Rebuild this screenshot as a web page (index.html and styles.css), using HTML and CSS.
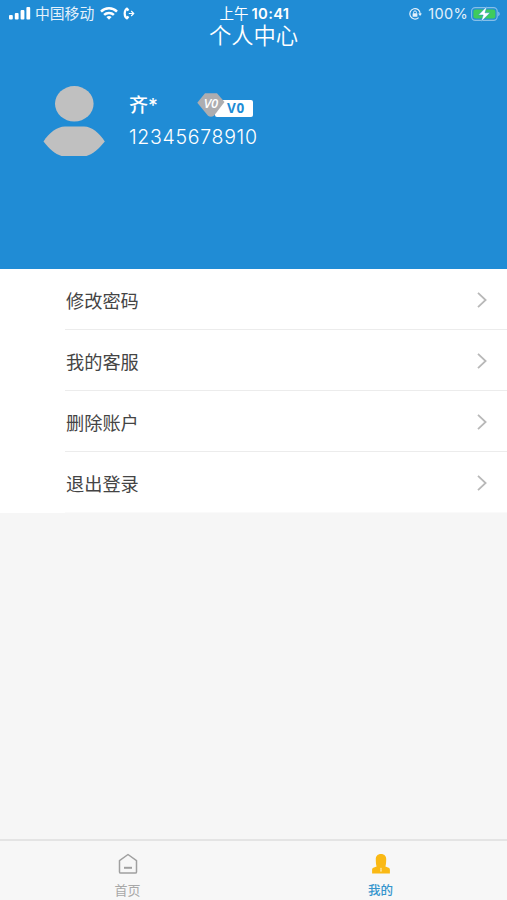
FILE: index.html
```html
<!DOCTYPE html>
<html lang="zh-CN">
<head>
    <meta charset="UTF-8">
    <meta name="viewport" content="width=device-width, initial-scale=1.0">
    <title>个人中心</title>
    <link rel="stylesheet" href="styles.css">
</head>
<body>
    <header class="header">
        <div class="status-bar">
            <div class="status-left">
                <svg class="signal" width="22" height="13" viewBox="0 0 22 13" fill="#fff">
                    <rect x="0" y="8" width="3.8" height="4.5" rx="1"/>
                    <rect x="5.8" y="6" width="3.8" height="6.5" rx="1"/>
                    <rect x="11.6" y="3" width="3.8" height="9.5" rx="1"/>
                    <rect x="17.4" y="0" width="3.8" height="12.5" rx="1"/>
                </svg>
                <span class="carrier">中国移动</span>
                <svg class="wifi" width="18" height="13" viewBox="0 0 18 13" fill="none" stroke="#fff" stroke-width="2.5">
                    <path d="M1 4.6a11.4 11.4 0 0 1 16 0"/>
                    <path d="M4.1 7.9a7 7 0 0 1 9.8 0"/>
                    <path d="M9 12.8L6.4 10.1a3.8 3.8 0 0 1 5.2 0z" fill="#fff" stroke="none"/>
                </svg>
                <svg class="call" width="12" height="13" viewBox="0 0 12 13" fill="none" stroke="#fff">
                    <path d="M4.6 1.2C.7 3 .7 10 4.6 11.8" stroke-width="2.2"/>
                    <path d="M3.8 1.4l1.6 2.2M3.8 11.6l1.6-2.2" stroke-width="2.4"/>
                    <path d="M5.8 6.5h4.6M8.2 4l2.5 2.5L8.2 9" stroke-width="1.2"/>
                </svg>
            </div>
            <div class="status-time"><span>上午</span><b>10:41</b></div>
            <div class="status-right">
                <svg class="lock" width="14" height="14" viewBox="0 0 14 14" fill="none" stroke="#e4f1fb">
                    <path d="M10.6 10.6A5.2 5.2 0 1 1 12.2 7" stroke-width="1.2"/>
                    <path d="M10.2 6.6h3.7l-1.8 2.4z" fill="#e4f1fb" stroke="none"/>
                    <rect x="4.6" y="6.2" width="4.8" height="3.6" rx=".5" fill="#e4f1fb" stroke="none"/>
                    <path d="M5.6 6.4V5.3a1.4 1.4 0 0 1 2.8 0v1.1" stroke-width="1"/>
                </svg>
                <span class="percent">100%</span>
                <svg class="battery" width="29" height="16" viewBox="0 0 29 16">
                    <rect x=".6" y="1.6" width="25.6" height="12.8" rx="3.6" fill="none" stroke="#86bfe8" stroke-width="1.1"/>
                    <rect x="2.4" y="3.4" width="22" height="9.2" rx="2" fill="#3fcb5c"/>
                    <path d="M27.2 5.8c2 .6 2 3.8 0 4.4z" fill="#86bfe8"/>
                    <path d="M16 .2L7.4 9h4.8L10 15.8l9-9h-5z" fill="#fff" stroke="#208cd5" stroke-width=".5"/>
                </svg>
            </div>
        </div>
        <h1 class="title">个人中心</h1>
        <div class="profile">
            <svg class="avatar" width="62" height="71" viewBox="0 0 62 71" fill="#c0c0c0">
                <ellipse cx="31.3" cy="17.8" rx="19.3" ry="17.7"/>
                <path d="M.5 55.5C6 47 14 40.6 22 40.6H41C49 40.6 56 47 61.8 55.5C56 62.5 50 68 43.5 70H18.5C12 68 6 62.5 .5 55.5z"/>
            </svg>
            <div class="info">
                <div class="name-row">
                    <span class="name">齐*</span>
                    <span class="level">
                        <span class="level-text">V0</span>
                        <svg class="gem" width="28" height="24" viewBox="0 0 28 24">
                            <path d="M8 .3h12l7.5 8.7L17 22.8q-3 2-6 0L.3 9.8z" fill="#adadb0"/>
                            <text class="gem-text" x="14" y="14.5" text-anchor="middle">V0</text>
                        </svg>
                    </span>
                </div>
                <div class="phone">12345678910</div>
            </div>
        </div>
    </header>

    <ul class="menu">
        <li class="menu-item">
            <span>修改密码</span>
            <svg class="arrow" width="10" height="16" viewBox="0 0 10 16"><path d="M1 .8L8.6 8 1 15.2"/></svg>
        </li>
        <li class="menu-item">
            <span>我的客服</span>
            <svg class="arrow" width="10" height="16" viewBox="0 0 10 16"><path d="M1 .8L8.6 8 1 15.2"/></svg>
        </li>
        <li class="menu-item">
            <span>删除账户</span>
            <svg class="arrow" width="10" height="16" viewBox="0 0 10 16"><path d="M1 .8L8.6 8 1 15.2"/></svg>
        </li>
        <li class="menu-item">
            <span>退出登录</span>
            <svg class="arrow" width="10" height="16" viewBox="0 0 10 16"><path d="M1 .8L8.6 8 1 15.2"/></svg>
        </li>
    </ul>

    <nav class="tab-bar">
        <a class="tab">
            <svg width="20" height="22" viewBox="0 0 20 22" fill="none" stroke="#a0a0a0" stroke-width="1.5">
                <path d="M1.5 7.6L10 1.5l8.5 6.1v11.3q0 1.2-1.2 1.2H2.7q-1.2 0-1.2-1.2z" stroke-linejoin="round"/>
                <path d="M6 14.8h8" stroke-width="2"/>
            </svg>
            <span>首页</span>
        </a>
        <a class="tab active">
            <svg width="20" height="22" viewBox="0 0 20 22">
                <path d="M10 1c3.4 0 5.2 2.2 5.2 5.2 0 2.8-.2 5.4-.8 7.4l3.2 1.2c1 .4 1.3 1.2 1.3 2.2v3.4H1.1V17c0-1 .3-1.8 1.3-2.2l3.2-1.2c-.6-2-.8-4.600-.8-7.400C4.800 3.200 6.600 1 10 1z" fill="#fab914"/>
                <path d="M10 14.6l.8 1-.3.800.4 1.600-.9.900-.9-.9.400-1.600-.3-.8z" fill="#fde6a6"/>
            </svg>
            <span>我的</span>
        </a>
    </nav>
</body>
</html>
```

FILE: styles.css
```css
* {
    box-sizing: border-box;
}

body {
    margin: 0;
    height: 900px;
    display: flex;
    flex-direction: column;
    background-color: #f6f6f6;
    font-family: "Liberation Sans", "Noto Sans CJK SC", sans-serif;
    color: #444;
}

.header {
    height: 269px;
    background-color: #208cd5;
    color: #fff;
}

.status-bar {
    display: grid;
    grid-template-columns: 1fr auto 1fr;
    align-items: center;
    height: 26px;
    padding: 1px 7px 0 9px;
    font-family: Inter, "Noto Sans CJK SC", sans-serif;
    font-size: 14.8px;
    line-height: 24px;
}

.status-left,
.status-right {
    display: flex;
    align-items: center;
}

.status-right {
    justify-content: flex-end;
}

.carrier {
    margin-left: 4px;
    color: #e4f1fb;
}

.wifi {
    margin-left: 6px;
}

.call {
    margin-left: 5px;
}

.status-time {
    display: flex;
    gap: 3px;
    font-size: 14.5px;
}

.status-time b {
    font-size: 14.8px;
    font-weight: 600;
    letter-spacing: 0.3px;
}

.percent {
    margin: 0 3px 0 6px;
    color: #e4f1fb;
    font-size: 14.5px;
    letter-spacing: 0.3px;
}

.title {
    margin: 0;
    height: 23px;
    line-height: 22px;
    font-size: 22.3px;
    font-weight: 350;
    text-align: center;
}

.profile {
    display: flex;
    padding: 37px 0 0 43px;
}

.info {
    margin-left: 24px;
}

.name-row {
    display: flex;
    align-items: center;
    height: 38px;
}

.name {
    width: 68px;
    padding-bottom: 3px;
    font-family: Inter, "Noto Sans CJK SC", sans-serif;
    font-size: 19px;
    font-weight: 500;
}

.level {
    position: relative;
    display: flex;
    align-items: center;
    justify-content: flex-end;
    width: 56px;
    height: 24px;
}

.level-text {
    width: 38px;
    height: 17px;
    margin-top: 7px;
    padding-left: 12px;
    border-radius: 2px;
    background-color: #fff;
    color: #208cd5;
    font-family: "Open Sans", sans-serif;
    font-size: 13.5px;
    font-weight: 700;
    letter-spacing: 0.8px;
    line-height: 17px;
}

/* gem overlaps the left end of the level plate */
.gem {
    position: absolute;
    left: 0;
    top: 0;
}

.gem-text {
    fill: #fff;
    font-family: "Open Sans", sans-serif;
    font-size: 13px;
    font-style: italic;
    font-weight: 600;
}

.phone {
    line-height: 26px;
    font-family: Inter, sans-serif;
    font-size: 19.5px;
    font-weight: 300;
    letter-spacing: 0.7px;
}

.menu {
    margin: 0;
    padding: 0 0 0 65px;
    list-style: none;
    background-color: #fff;
}

.menu-item {
    display: flex;
    align-items: center;
    justify-content: space-between;
    height: 61px;
    padding: 2px 20px 0 1px;
    border-bottom: 1px solid #ececec;
    font-size: 18.2px;
}

.menu-item:last-child {
    border-bottom-color: #fafafa;
}

.arrow {
    fill: none;
    stroke: #b8b8b8;
    stroke-width: 1.8;
}

.tab-bar {
    display: flex;
    height: 61px;
    margin-top: auto;
    border-top: 2px solid #e4e4e4;
    background-color: #f7f7f7;
}

.tab {
    flex: 1;
    display: flex;
    flex-direction: column;
    align-items: center;
    padding: 12px 0 0 1px;
    color: #a8a8a8;
    font-size: 13px;
    line-height: 20px;
}

.tab svg {
    flex-shrink: 0;
}

.tab span {
    margin-top: 6px;
}

.tab.active {
    padding-left: 0;
    color: #3595cd;
    font-size: 12.5px;
    font-weight: 500;
}
```
